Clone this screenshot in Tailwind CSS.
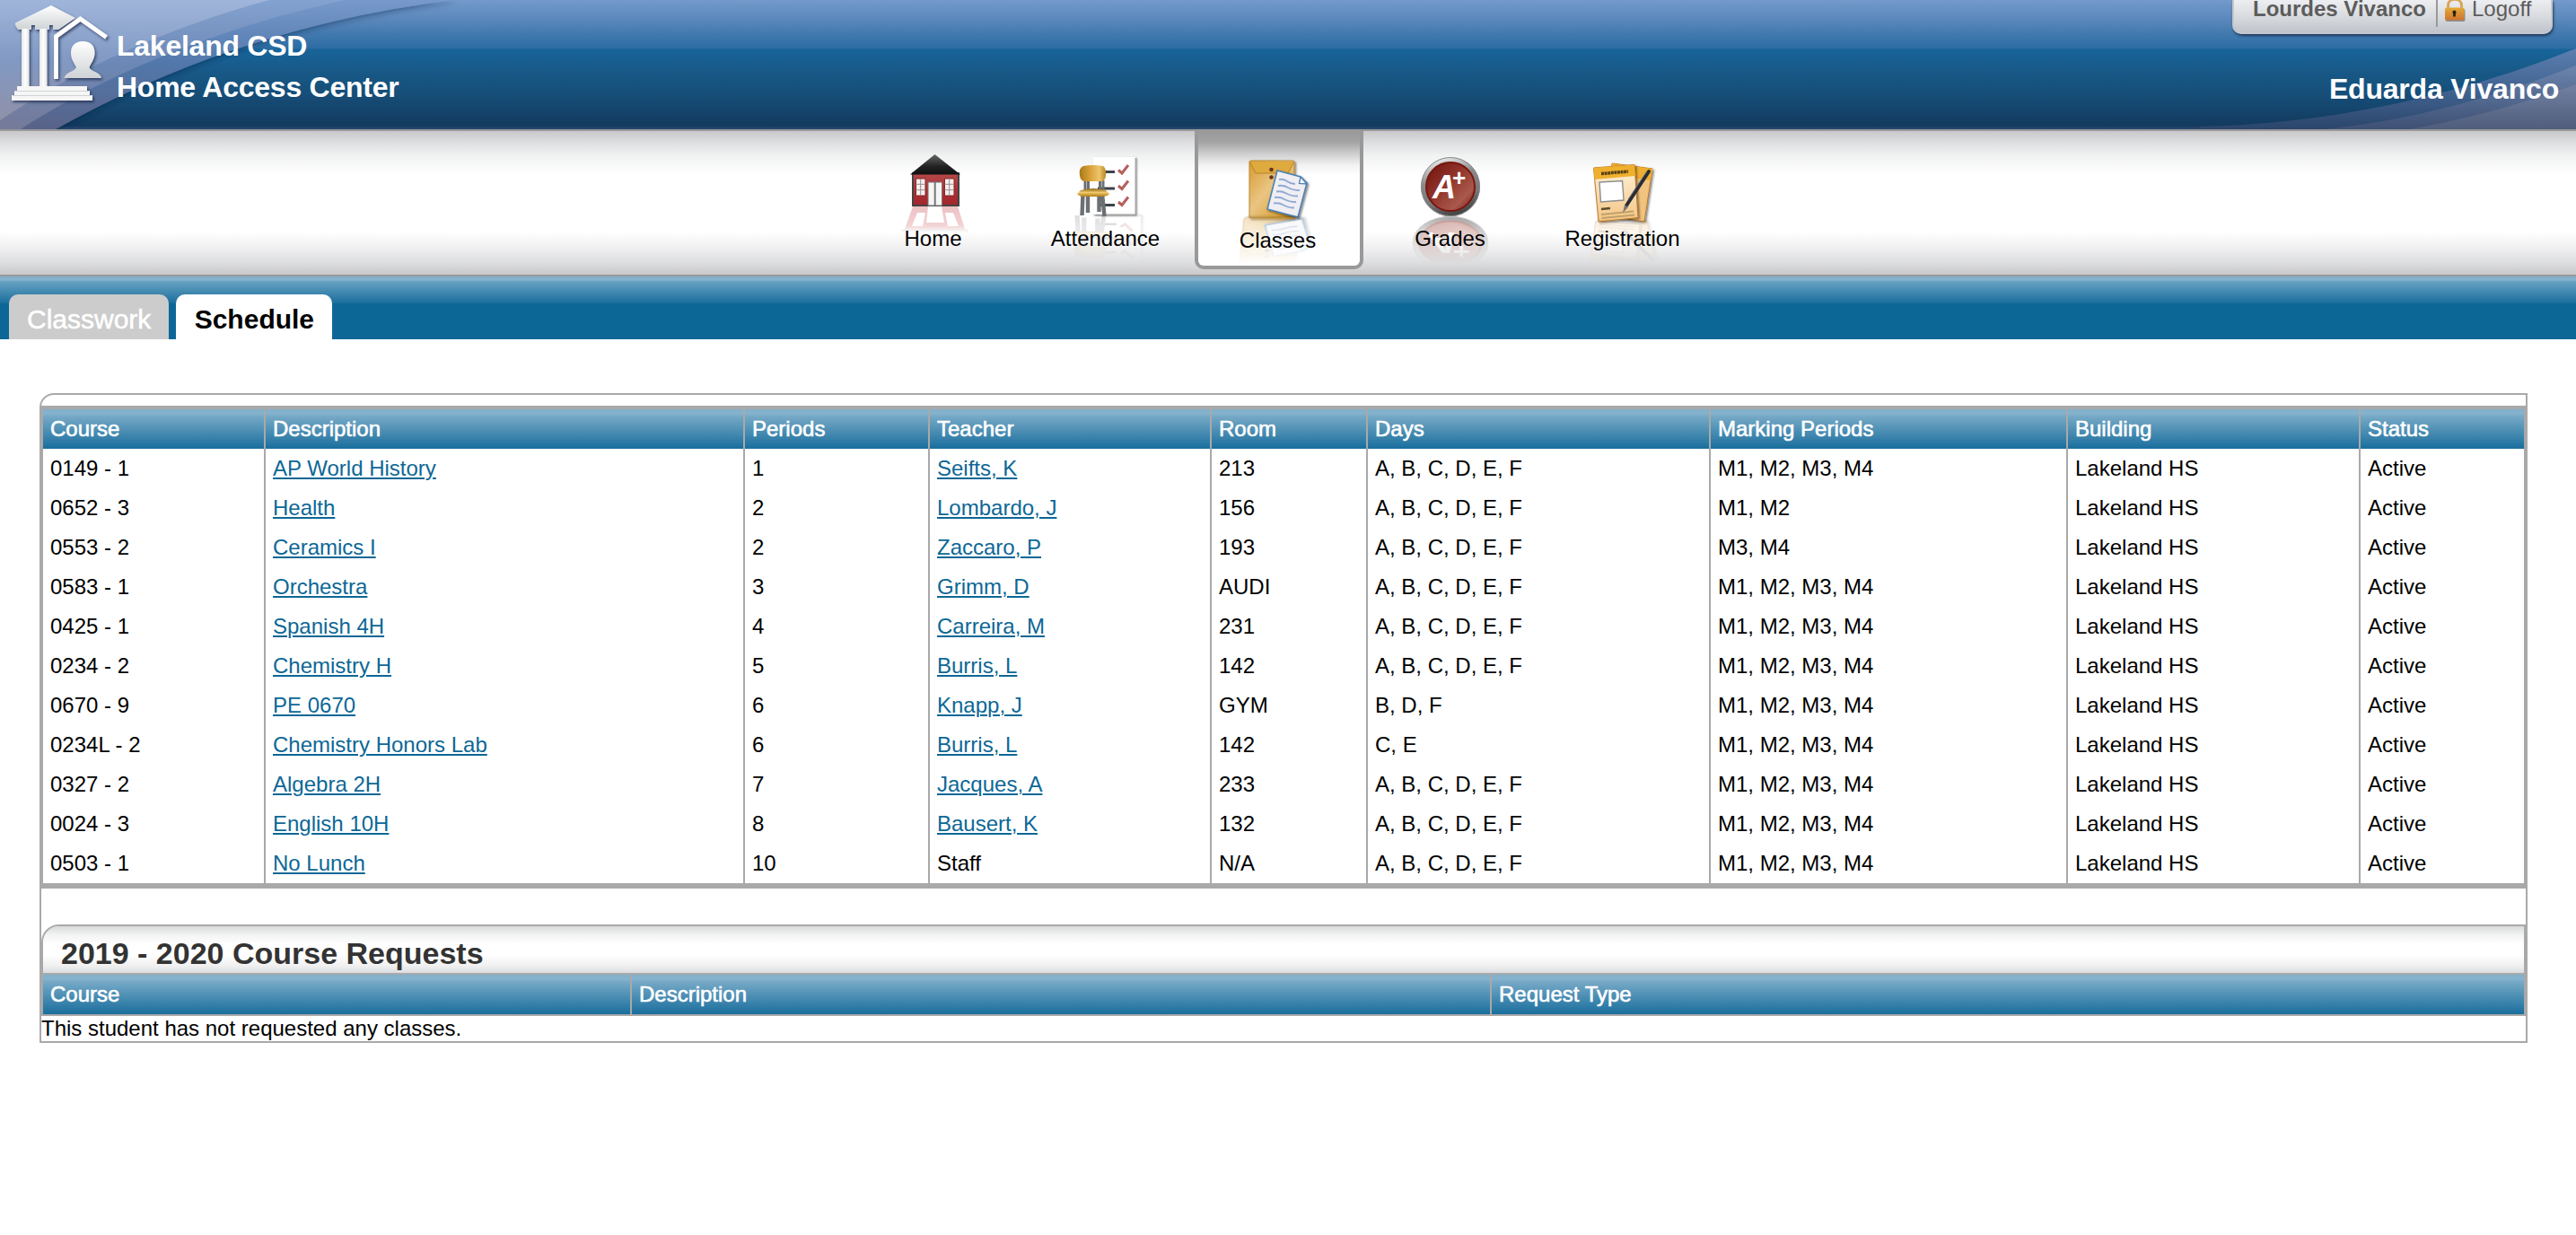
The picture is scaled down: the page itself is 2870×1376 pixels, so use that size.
<!DOCTYPE html>
<html lang="en">
<head>
<meta charset="utf-8">
<title>Home Access Center - Schedule</title>
<script src="https://cdn.jsdelivr.net/npm/@tailwindcss/browser@4"></script>
</head>
<body class="bg-white text-black text-[24px] leading-[28px] font-['Liberation_Sans',Arial,sans-serif] overflow-hidden">

<header class="relative h-[146px] border-b-2 border-[#999999] bg-[linear-gradient(180deg,#739acb_0px,#5a87bb_22px,#2a6ca3_54px,#17649a_55px,#185b8a_75px,#164e78_105px,#133a5f_140px,#2c4a72_144px)] overflow-hidden">
  <svg class="absolute left-0 top-0" width="520" height="144" viewBox="0 0 520 144">
    <defs>
      <linearGradient id="l1" gradientUnits="userSpaceOnUse" x1="0" y1="0" x2="0" y2="144"><stop offset="0" stop-color="#7799cb"/><stop offset=".5" stop-color="#5177aa"/><stop offset="1" stop-color="#596388"/></linearGradient>
      <linearGradient id="l2" gradientUnits="userSpaceOnUse" x1="0" y1="0" x2="0" y2="144"><stop offset="0" stop-color="#84a2cf"/><stop offset=".5" stop-color="#6c87b5"/><stop offset="1" stop-color="#757a99"/></linearGradient>
      <linearGradient id="l3" gradientUnits="userSpaceOnUse" x1="0" y1="0" x2="0" y2="134"><stop offset="0" stop-color="#a0b5da"/><stop offset=".5" stop-color="#8199c3"/><stop offset="1" stop-color="#9091a8"/></linearGradient>
      <filter id="edge" x="-5%" y="-5%" width="110%" height="125%"><feDropShadow dx="2" dy="2" stdDeviation="3" flood-color="#0a2444" flood-opacity=".45"/></filter>
    </defs>
    <path d="M0 0H507C340 20 190 72 62 144H0Z" fill="url(#l1)" filter="url(#edge)"/>
    <path d="M0 0H385C245 30 115 84 23 144H0Z" fill="url(#l2)"/>
    <path d="M0 0H300C190 30 90 74 0 134Z" fill="url(#l3)"/>
  </svg>
  <svg class="absolute right-0 top-0" width="420" height="144" viewBox="0 0 420 144">
    <defs>
      <linearGradient id="r1" gradientUnits="userSpaceOnUse" x1="0" y1="0" x2="0" y2="144"><stop offset=".37" stop-color="#5b7fb0"/><stop offset=".7" stop-color="#416390"/><stop offset="1" stop-color="#2b456b"/></linearGradient>
      <linearGradient id="r2" gradientUnits="userSpaceOnUse" x1="0" y1="0" x2="0" y2="144"><stop offset=".5" stop-color="#6c86af"/><stop offset="1" stop-color="#3e5074"/></linearGradient>
      <linearGradient id="r3" gradientUnits="userSpaceOnUse" x1="0" y1="0" x2="0" y2="144"><stop offset=".6" stop-color="#7686a8"/><stop offset="1" stop-color="#505d7c"/></linearGradient>
    </defs>
    <path d="M0 141C150 138 290 106 420 54V144H0Z" fill="url(#r1)"/>
    <path d="M140 144C240 134 330 108 420 73V144Z" fill="url(#r2)"/>
    <path d="M235 144C300 132 360 116 420 94V144Z" fill="url(#r3)"/>
  </svg>
  <div class="relative flex justify-between">
    <div class="flex">
      <svg class="w-[130px] h-[144px]" viewBox="0 0 130 144">
        <defs>
          <linearGradient id="lg" x1="0" y1="0" x2="0" y2="1"><stop offset="0" stop-color="#ffffff"/><stop offset="1" stop-color="#cfd3d5"/></linearGradient>
          <linearGradient id="cg" x1="0" y1="0" x2="1" y2="0"><stop offset="0" stop-color="#e4e6e8"/><stop offset=".5" stop-color="#ffffff"/><stop offset="1" stop-color="#e1e3e5"/></linearGradient>
          <filter id="sh" x="-20%" y="-20%" width="140%" height="140%"><feDropShadow dx="1.5" dy="2" stdDeviation="1.6" flood-color="#1c2b49" flood-opacity=".75"/></filter>
        </defs>
        <g filter="url(#sh)">
          <path d="M57 6 17 25.500V28L20 33H35V28H39V33H55V28H59V33H65L84 20Z" fill="url(#lg)"/>
          <rect x="24" y="32" width="8.500" height="65" fill="url(#cg)"/>
          <rect x="44" y="32" width="8.500" height="65" fill="url(#cg)"/>
          <path d="M19 96H97V101H100V106H103V112H13V106H16V101H19Z" fill="#f6f6f6"/>
          <path d="M16.500 101.500H99.500M14 106.500H102" stroke="#d0d3d5" fill="none"/>
          <path d="M62.500 88V40.500L89.500 21 118.500 41.500" fill="none" stroke="#fff" stroke-width="4.800"/>
          <path d="M92 46C101 46 106 51 105.500 60C105 67 101 71 99.500 75C101 80 112 80 113 87H71.500C73 80 83 80 85 75C83 71 79 66 79 59C79 51 84 46 92 46Z" fill="url(#lg)"/>
        </g>
      </svg>
      <h1 class="pt-7 text-[32px] leading-[46px] font-bold tracking-[-0.25px] text-white whitespace-nowrap">Lakeland CSD<br>Home Access Center</h1>
    </div>
    <div class="flex flex-col items-end">
      <div class="mr-[26px] flex h-[38px] w-[357px] rounded-b-[10px] bg-[linear-gradient(180deg,#eceef2,#d9dbdf_50%,#bfc4cb)] border-x-2 border-b-2 border-[#c4c7cc] shadow-[1px_2px_3px_rgba(20,40,70,0.8)] pl-[21px] text-[#5c5c5c]">
        <span class="-mt-1 w-[204px] whitespace-nowrap font-bold">Lourdes Vivanco</span>
        <span class="h-[30px] w-[2px] bg-[#999999]"></span>
        <svg class="ml-[6px] h-[26px] w-[26px]" viewBox="0 0 26 26">
          <defs><linearGradient id="lk" x1="0" y1="0" x2="0" y2="1"><stop offset="0" stop-color="#e3aa35"/><stop offset="1" stop-color="#cf7330"/></linearGradient></defs>
          <path d="M5.500 11V6C5.500-3 20.500-3 20.500 6V11" fill="none" stroke="#d9a558" stroke-width="3"/>
          <rect x="2.500" y="10" width="22" height="14" rx="2" fill="#00000055"/>
          <rect x="2" y="8.500" width="21.500" height="14" rx="2" fill="url(#lk)"/>
          <path d="M12.500 11.500A2.300 2.300 0 0 1 13.800 15.500V18.500H11.200V15.500A2.300 2.300 0 0 1 12.500 11.500Z" fill="#2b1c08"/>
        </svg>
        <span class="-mt-1 ml-[6px]">Logoff</span>
      </div>
      <div class="mt-[38px] mr-[19px] text-[32px] leading-[46px] font-bold tracking-[-0.2px] text-white whitespace-nowrap">Eduarda Vivanco</div>
    </div>
  </div>
</header>

<nav class="flex h-[162px] justify-start gap-1 border-b-2 border-[#999999] bg-[linear-gradient(180deg,#c8c8ca_0px,#dfe0e2_14px,#f1f2f2_28px,#ffffff_48px,#ffffff_112px,#f0f0f1_130px,#dedfe1_146px,#c8c8cb_160px)] pl-[947px]">
  <a class="relative h-[154px] w-[188px] pr-[3px] pt-[106px] text-center">
    <svg class="absolute left-0 top-0" width="188" height="154" viewBox="0 0 188 154">
      <defs>
        <linearGradient id="mf" gradientUnits="userSpaceOnUse" x1="0" y1="90" x2="0" y2="148"><stop offset="0" stop-color="#888"/><stop offset=".45" stop-color="#444"/><stop offset="1" stop-color="#000"/></linearGradient>
        <mask id="m" maskUnits="userSpaceOnUse" x="0" y="80" width="188" height="74"><rect x="0" y="80" width="188" height="74" fill="url(#mf)"/></mask>
        <linearGradient id="mhf" gradientUnits="userSpaceOnUse" x1="0" y1="84" x2="0" y2="114"><stop offset="0" stop-color="#777"/><stop offset=".7" stop-color="#555"/><stop offset="1" stop-color="#000"/></linearGradient>
        <mask id="mh" maskUnits="userSpaceOnUse" x="0" y="80" width="188" height="36"><rect x="0" y="80" width="188" height="36" fill="url(#mhf)"/></mask>
        <linearGradient id="rf" x1="0" y1="0" x2="0" y2="1"><stop offset="0" stop-color="#666"/><stop offset=".6" stop-color="#222"/><stop offset="1" stop-color="#111"/></linearGradient>
        <linearGradient id="wl" x1="0" y1="0" x2="0" y2="1"><stop offset="0" stop-color="#b5494a"/><stop offset=".6" stop-color="#a92e33"/><stop offset="1" stop-color="#a3262c"/></linearGradient>
        <filter id="ds" x="-20%" y="-20%" width="150%" height="150%"><feDropShadow dx="1.500" dy="1.500" stdDeviation="1.200" flood-color="#000" flood-opacity=".5"/></filter>
      </defs>
      <g id="home">
        <rect x="70" y="47" width="51" height="36" fill="url(#wl)" stroke="#444" stroke-width="2"/>
        <path d="M94.500 26 123 48.500H67Z" fill="url(#rf)"/>
        <path d="M73.500 53H84V72H73.500ZM105.500 53H116V72H105.500Z" fill="#f3f0ee" stroke="#8a2226"/>
        <path d="M78.700 53V72M73.500 59.300H84M73.500 65.600H84M110.700 53V72M105.500 59.300H116M105.500 65.600H116" stroke="#9c8f8f" fill="none"/>
        <rect x="87" y="57" width="15.500" height="26" fill="#f5f5f5" stroke="#777"/>
        <path d="M94.700 57V83" stroke="#777" stroke-width="2"/>
      </g>
      <g mask="url(#mh)" stroke="none">
        <path d="M70 84H120L129 112H60Z" fill="#d97a80"/>
        <path d="M87 84H102L105 102H85ZM75 91H84L81 106H69ZM106 91H115L121 106H109Z" fill="#fff"/>
        <path d="M57 111H132" stroke="#999" stroke-width="3"/>
      </g>
    </svg>
    <span class="relative">Home</span>
  </a>
  <a class="relative h-[154px] w-[188px] pr-[3px] pt-[106px] text-center">
    <svg class="absolute left-0 top-0" width="188" height="154" viewBox="0 0 188 154">
      <defs>
        <linearGradient id="ch" x1="0" y1="0" x2="1" y2="0"><stop offset="0" stop-color="#a97819"/><stop offset=".4" stop-color="#d9a138"/><stop offset=".75" stop-color="#edc46d"/><stop offset="1" stop-color="#b98720"/></linearGradient>
        <linearGradient id="ch2" x1="0" y1="0" x2="0" y2="1"><stop offset="0" stop-color="#8d6414"/><stop offset=".5" stop-color="#efc96c"/><stop offset="1" stop-color="#b27c18"/></linearGradient>
      </defs>
      <g id="att">
        <rect x="79" y="29" width="47" height="64" fill="#fff" filter="url(#ds)"/>
        <path d="M126.500 30V93.500H90" fill="none" stroke="#aaa" stroke-width="2"/>
        <path d="M92 45.500H103M84 64H103M84 82.500H103" stroke="#3f4347" stroke-width="3"/>
        <g fill="none" stroke="#b5605c" stroke-width="3"><path d="M107 43.500 111 47 118 38"/><path d="M107 61 111 64.500 118 55.500"/><path d="M107 79 111 82.500 118 73.500"/></g>
        <path d="M70 55V66M73.500 55V66M86.500 55V66M90 55V66" stroke="#6c7074" stroke-width="3"/>
        <path d="M67.500 70 66.500 94M73 72V91M89 70 91.500 95M85.500 72V90" stroke="#6c7074" stroke-width="4.400"/>
        <path d="M68 39C75 37.500 83 37.500 90 39Q93.500 41 93 50Q92 56 88 56H70Q65 56 64 50Q62.500 41 68 39Z" fill="url(#ch)"/>
        <path d="M65 66Q79 62 93 66L97 70Q95 73 88 73H70Q63 73 61 70Z" fill="url(#ch2)"/>
      </g>
      <g mask="url(#m)" opacity=".45"><use href="#att" transform="translate(94 94) scale(1.200 -.85) translate(-94 -94)"/></g>
    </svg>
    <span class="relative">Attendance</span>
  </a>
  <a class="relative h-[154px] w-[188px] rounded-b-[10px] border-x-4 border-b-4 border-[#999999] bg-[linear-gradient(180deg,#999999_0px,#a3a3a3_12px,#d0d0d0_26px,#f2f2f2_38px,#ffffff_50px)] pr-[3px] pt-[108px] text-center">
    <svg class="absolute -left-1 top-0" width="188" height="150" viewBox="0 0 188 150">
      <defs>
        <linearGradient id="en" x1="0" y1="0" x2="1" y2="1"><stop offset="0" stop-color="#d79a2e"/><stop offset=".45" stop-color="#e9c583"/><stop offset=".8" stop-color="#dba53c"/><stop offset="1" stop-color="#c88a1d"/></linearGradient>
      </defs>
      <g id="cls">
        <rect x="61" y="33" width="50" height="64" rx="1.500" fill="url(#en)" stroke="#bd8a35" filter="url(#ds)"/>
        <path d="M61.500 34 68 47H104L111 34" fill="#dfaa3e" stroke="#b8832a"/>
        <circle cx="85.500" cy="43" r="2.300" fill="#6b3420"/><circle cx="85.500" cy="51.500" r="2.300" fill="#6b3420"/>
        <g filter="url(#ds)">
          <path d="M92 44 118 51 125 58 115 96 81 87Z" fill="#efeef2" stroke="#4d82b5" stroke-width="1.600"/>
        </g>
        <path d="M118 51 116.500 58.500 125 59Z" fill="#fff" stroke="#4d82b5" stroke-width="1.300"/>
        <g fill="none" stroke="#8fa9d6" stroke-width="1.800"><path d="M94 54q5-1 9 2t9 3"/><path d="M93 61q6-1 11 2t13 3"/><path d="M91 67.500q6-1 11 2t13 3"/><path d="M89 74q6-1 11 2t13 3"/><path d="M88 80.500q6-1 11 2t12 3"/></g>
      </g>
      <g mask="url(#m)"><use href="#cls" transform="translate(90 97) skewX(-6) scale(1.200 -.8) translate(-90 -97)"/></g>
    </svg>
    <span class="relative">Classes</span>
  </a>
  <a class="relative h-[154px] w-[188px] pr-[3px] pt-[106px] text-center">
    <svg class="absolute left-0 top-0" width="188" height="154" viewBox="0 0 188 154">
      <defs>
        <linearGradient id="ri" x1=".3" y1="0" x2=".6" y2="1"><stop offset="0" stop-color="#f2f2f2"/><stop offset=".35" stop-color="#8b8b8b"/><stop offset=".7" stop-color="#777"/><stop offset="1" stop-color="#3d3d3d"/></linearGradient>
        <linearGradient id="re" x1="0" y1="0" x2="1" y2="1"><stop offset="0" stop-color="#6f120c"/><stop offset=".45" stop-color="#93362c"/><stop offset=".75" stop-color="#a9594c"/><stop offset="1" stop-color="#7b1a12"/></linearGradient>
      </defs>
      <g id="grd">
        <circle cx="93" cy="62" r="33" fill="url(#ri)"/>
        <circle cx="93" cy="62" r="32.500" fill="none" stroke="#888"/>
        <circle cx="93" cy="62" r="27" fill="url(#re)" stroke="#7a150f" stroke-width="2"/>
        <text x="73" y="75" font-size="36" font-weight="bold" font-style="italic" fill="#fff" font-family="Liberation Sans, sans-serif">A</text>
        <text x="95" y="61" font-size="26" font-weight="bold" fill="#fff" font-family="Liberation Sans, sans-serif">+</text>
      </g>
      <g mask="url(#m)"><use href="#grd" transform="translate(93 95) scale(1.280 -.9) translate(-93 -95)"/></g>
    </svg>
    <span class="relative">Grades</span>
  </a>
  <a class="relative h-[154px] w-[188px] pr-[3px] pt-[106px] text-center">
    <svg class="absolute left-0 top-0" width="188" height="154" viewBox="0 0 188 154">
      <defs>
        <linearGradient id="pg" x1="0" y1="0" x2="0" y2="1"><stop offset="0" stop-color="#fff3dc"/><stop offset="1" stop-color="#f3c583"/></linearGradient>
      </defs>
      <g id="reg">
        <path d="M81 36 126 42 117 101 72 94Z" fill="#f2c37e" stroke="#b97a2c" filter="url(#ds)"/>
        <path d="M81 36 126 42 124 55 79 49Z" fill="#eeae30"/>
        <path d="M60.500 41 106 37.500 110 96.500 66 101Z" fill="url(#pg)" stroke="#b97a2c" filter="url(#ds)"/>
        <path d="M60.500 41 106 37.500 107 50 61.500 54Z" fill="#efb02e"/>
        <path d="M69 47.500 99 45" stroke="#5a4316" stroke-width="3.500" stroke-dasharray="3 .6"/>
        <path d="M67 57 92.500 55.500 94 77 68.500 79Z" fill="#fff" stroke="#8e8e8e" stroke-width="1.400"/>
        <path d="M69 87 79 86" stroke="#5d4a2a" stroke-width="2.500"/>
        <path d="M69 93 105 89.500M69.500 97 106 93.500" stroke="#c1a06a" stroke-width="2"/>
        <path d="M122 45 97 83" stroke="#2a2d33" stroke-width="4" stroke-linecap="round"/>
        <path d="M119 46 99 76" stroke="#6f747c"/>
        <path d="M95 82 99 85 93 91Z" fill="#777"/>
      </g>
      <g mask="url(#m)" opacity=".6"><use href="#reg" transform="translate(93 101) scale(1.120 -.75) translate(-93 -101)"/></g>
    </svg>
    <span class="relative">Registration</span>
  </a>
</nav>

<div class="flex h-[70px] items-end gap-2 bg-[linear-gradient(180deg,#80b0cc_0px,#86b3cd_4px,#66a1c1_6px,#1a6e9d_30px,#0d6796_30px,#0d6796_70px)] pl-[10px] text-[30px] leading-[45px]">
  <a class="h-[50px] rounded-t-[10px] bg-[#cccccc] px-5 pt-[5px] text-white [-webkit-text-stroke:0.5px_white]">Classwork</a>
  <a class="h-[50px] w-[174px] rounded-t-[10px] bg-white pt-[5px] text-center font-bold">Schedule</a>
</div>

<main class="ml-11 mt-[60px] w-[2772px] rounded-tl-[16px] border-2 border-[#a9a9a9] pt-3">
  <table class="w-full table-fixed border-separate border-spacing-0 border-x-2 border-t-4 border-b-[6px] border-[#a9a9a9] leading-[44px]">
    <colgroup>
      <col class="w-[248px]"><col class="w-[534px]"><col class="w-[206px]"><col class="w-[314px]"><col class="w-[174px]"><col class="w-[382px]"><col class="w-[398px]"><col class="w-[326px]"><col class="w-[182px]">
    </colgroup>
    <thead>
      <tr id="head" class="h-11 text-left text-white [-webkit-text-stroke:0.6px_white]"></tr>
    </thead>
    <tbody id="rows"></tbody>
  </table>

  <section class="mt-10 overflow-hidden rounded-tl-[20px] border-2 border-[#a9a9a9]">
    <h2 class="h-[54px] border-b-2 border-[#a9a9a9] bg-[linear-gradient(180deg,#d8d9d9_0px,#f3f4f4_10px,#ffffff_20px,#ffffff_32px,#f0f0f1_44px,#dcdde0_52px)] pl-5 pt-2 text-[34px] font-bold leading-[44px] text-[#333333]">2019 - 2020 Course Requests</h2>
    <div class="grid h-11 grid-cols-[656px_958px_1fr] bg-[linear-gradient(180deg,#80b0cc_0px,#86b3cd_5px,#78aac7_7px,#196e9d_44px)] leading-[44px] text-white [-webkit-text-stroke:0.6px_white]">
      <div class="border-r-2 border-[#a9a9a9] pl-2">Course</div>
      <div class="border-r-2 border-[#a9a9a9] pl-2">Description</div>
      <div class="pl-2">Request Type</div>
    </div>
  </section>
  <p class="h-7">This student has not requested any classes.</p>
</main>

<script>
const heads = ['Course','Description','Periods','Teacher','Room','Days','Marking Periods','Building','Status'];
const all = 'A, B, C, D, E, F', year = 'M1, M2, M3, M4';
const rows = [
  ['0149 - 1','AP World History','1','Seifts, K','213',all,year],
  ['0652 - 3','Health','2','Lombardo, J','156',all,'M1, M2'],
  ['0553 - 2','Ceramics I','2','Zaccaro, P','193',all,'M3, M4'],
  ['0583 - 1','Orchestra','3','Grimm, D','AUDI',all,year],
  ['0425 - 1','Spanish 4H','4','Carreira, M','231',all,year],
  ['0234 - 2','Chemistry H','5','Burris, L','142',all,year],
  ['0670 - 9','PE 0670','6','Knapp, J','GYM','B, D, F',year],
  ['0234L - 2','Chemistry Honors Lab','6','Burris, L','142','C, E',year],
  ['0327 - 2','Algebra 2H','7','Jacques, A','233',all,year],
  ['0024 - 3','English 10H','8','Bausert, K','132',all,year],
  ['0503 - 1','No Lunch','10','Staff','N/A',all,year],
];
const cell = 'h-11 p-0 pl-2 border-r-2 border-[#a9a9a9] last:border-r-0';
const headCell = cell + ' font-normal bg-[linear-gradient(180deg,#80b0cc_0px,#86b3cd_5px,#78aac7_7px,#196e9d_44px)] bg-no-repeat';
const link = 'text-[#0d6796] underline decoration-2 underline-offset-[2px]';
document.getElementById('head').innerHTML = heads.map(h => `<th class="${headCell}">${h}</th>`).join('');
document.getElementById('rows').innerHTML = rows.map(r =>
  '<tr>' + [...r, 'Lakeland HS', 'Active'].map((v, i) =>
    `<td class="${cell}">${i === 1 || (i === 3 && v !== 'Staff') ? `<a class="${link}">${v}</a>` : v}</td>`).join('') + '</tr>').join('');
</script>
</body>
</html>
